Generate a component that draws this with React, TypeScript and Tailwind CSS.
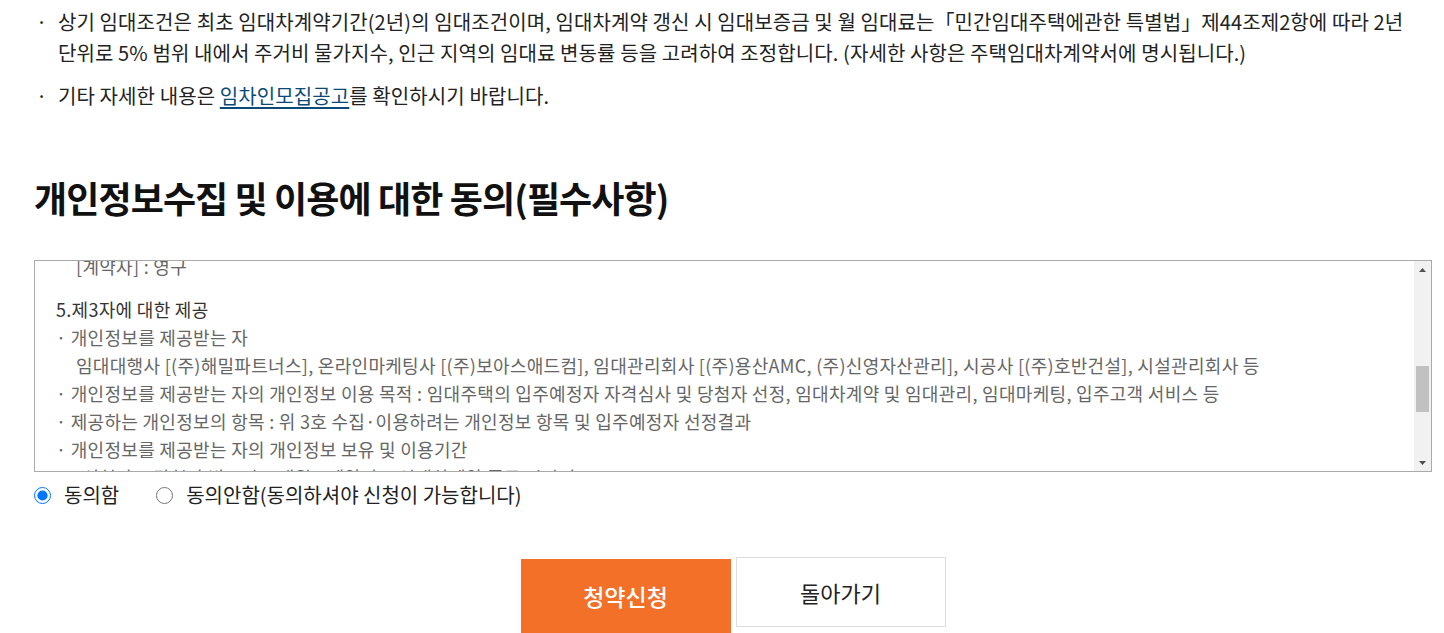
import { useLayoutEffect, useRef } from 'react';

const sections = [
  {
    title: '1.개인정보의 수집·이용 목적',
    items: [
      { text: '· 임대주택 입주자 모집 및 입주예정자 자격심사, 당첨자 선정, 임대차계약 체결 및 임대관리' },
      { text: '· 청약 관련 안내 및 고지사항 전달, 민원처리 및 분쟁 해결' },
    ],
  },
  {
    title: '2.수집·이용하려는 개인정보 항목',
    items: [
      { text: '· 필수항목 : 성명, 생년월일, 주소, 휴대전화번호, 이메일, 세대구성원 정보' },
      { text: '· 자격심사 항목 : 주택소유 여부, 소득 및 자산 정보, 청약통장 가입내역 등' },
    ],
  },
  {
    title: '3.개인정보의 보유 및 이용기간',
    items: [
      { text: '· 개인정보 수집·이용 목적이 달성된 후에는 해당 정보를 지체 없이 파기합니다.' },
      { text: '[신청자] : 당첨자 발표일로부터 6개월', indent: true },
    ],
  },
  {
    title: '4.개인정보의 보유기간',
    items: [
      { text: '[미당첨자] : 당첨자 발표 후 6개월', indent: true },
      { text: '[계약자] : 영구', indent: true },
    ],
  },
];

const thirdParty = [
  { text: '· 개인정보를 제공받는 자' },
  {
    text: '임대대행사 [(주)해밀파트너스], 온라인마케팅사 [(주)보아스애드컴], 임대관리회사 [(주)용산AMC, (주)신영자산관리], 시공사 [(주)호반건설], 시설관리회사 등',
    indent: true,
  },
  {
    text: '· 개인정보를 제공받는 자의 개인정보 이용 목적 : 임대주택의 입주예정자 자격심사 및 당첨자 선정, 임대차계약 및 임대관리, 임대마케팅, 입주고객 서비스 등',
  },
  { text: '· 제공하는 개인정보의 항목 : 위 3호 수집·이용하려는 개인정보 항목 및 입주예정자 선정결과' },
  { text: '· 개인정보를 제공받는 자의 개인정보 보유 및 이용기간' },
  { text: '[신청자] : 당첨자 발표 후 6개월, [계약자] : 임대차계약 종료 시까지', indent: true },
];

const Scrollbar = () => (
  <div className="flex w-[17px] shrink-0 flex-col bg-[#f1f1f1]">
    <div className="flex h-[17px] items-center justify-center">
      <svg width="7" height="4" viewBox="0 0 7 4">
        <path d="M0 4 L3.5 0 L7 4 Z" fill="#505050" />
      </svg>
    </div>
    <div className="flex-1 px-[2px]">
      <div className="mt-[88px] h-[46px] bg-[#c1c1c1]" />
    </div>
    <div className="flex h-[17px] items-center justify-center">
      <svg width="7" height="4" viewBox="0 0 7 4">
        <path d="M0 0 L7 0 L3.5 4 Z" fill="#505050" />
      </svg>
    </div>
  </div>
);

const App = () => {
  const boxRef = useRef<HTMLDivElement>(null);
  const targetRef = useRef<HTMLParagraphElement>(null);

  useLayoutEffect(() => {
    if (boxRef.current && targetRef.current) {
      boxRef.current.scrollTop = targetRef.current.offsetTop - 34;
    }
  }, []);

  return (
    <div className="min-h-[633px] bg-white pl-[34px] pr-[12px] pt-[6px] font-['Noto_Sans_CJK_KR',sans-serif] text-[#222]">
      <ul className="flex flex-col gap-[12px] text-[20px] leading-[31px] tracking-[0.1px]">
        <li className="relative pl-[24px]">
          <span className="absolute left-[2px] top-0">·</span>
          상기 임대조건은 최초 임대차계약기간(2년)의 임대조건이며, 임대차계약 갱신 시 임대보증금 및 월 임대료는「민간임대주택에관한 특별법」제44조제2항에 따라 2년
          <br />
          단위로 5% 범위 내에서 주거비 물가지수, 인근 지역의 임대료 변동률 등을 고려하여 조정합니다. (자세한 사항은 주택임대차계약서에 명시됩니다.)
        </li>
        <li className="relative pl-[24px]">
          <span className="absolute left-[2px] top-0">·</span>
          기타 자세한 내용은{' '}
          <a href="#" className="text-[#0b4a78] underline underline-offset-[3px]">
            임차인모집공고
          </a>
          를 확인하시기 바랍니다.
        </li>
      </ul>

      <h2 className="mt-[66px] text-[36px] font-bold leading-[40px] tracking-[-0.9px] text-[#111]">
        개인정보수집 및 이용에 대한 동의(필수사항)
      </h2>

      <div className="mt-[43px] flex h-[212px] border border-[#aaa]">
        <div
          ref={boxRef}
          className="relative flex-1 overflow-hidden pl-[21px] text-[18px] leading-[28px] tracking-[0.3px]"
        >
          <div className="pt-[10px] pb-[20px]">
            {sections.map(section => (
              <div key={section.title} className="mb-[15px]">
                <p className="text-[#333]">{section.title}</p>
                {section.items.map(item => (
                  <p key={item.text} className={item.indent ? 'pl-[20px] text-[#666]' : 'text-[#666]'}>
                    {item.text}
                  </p>
                ))}
              </div>
            ))}
            <div className="mb-[15px]">
              <p ref={targetRef} className="text-[#333]">
                5.제3자에 대한 제공
              </p>
              {thirdParty.map(item => (
                <p key={item.text} className={item.indent ? 'pl-[20px] text-[#666]' : 'text-[#666]'}>
                  {item.text}
                </p>
              ))}
            </div>
            <div>
              <p className="text-[#333]">6.동의를 거부할 권리 및 동의 거부 시 불이익</p>
              <p className="text-[#666]">
                · 개인정보 수집·이용 및 제3자 제공에 대한 동의를 거부할 수 있으며, 동의하지 않을 경우 청약신청이 제한됩니다.
              </p>
            </div>
          </div>
        </div>
        <Scrollbar />
      </div>

      <div className="mt-[11px] flex items-center text-[20px] leading-[24px]">
        <label className="flex items-center gap-[13px]">
          <input type="radio" name="agree" defaultChecked className="m-0 h-[17px] w-[17px] accent-[#0075ff]" />
          동의함
        </label>
        <label className="ml-[37px] flex items-center gap-[13px]">
          <input type="radio" name="agree" className="m-0 h-[17px] w-[17px] accent-[#0075ff]" />
          동의안함(동의하셔야 신청이 가능합니다)
        </label>
      </div>

      <div className="mt-[50px] flex items-start justify-center gap-[5px]">
        <button className="mt-[2px] h-[74px] w-[210px] bg-[#f37029] text-[23px] font-medium text-white">
          청약신청
        </button>
        <button className="h-[70px] w-[210px] border border-[#ddd] bg-white text-[22px] text-[#222]">
          돌아가기
        </button>
      </div>
    </div>
  );
};

export default App;
